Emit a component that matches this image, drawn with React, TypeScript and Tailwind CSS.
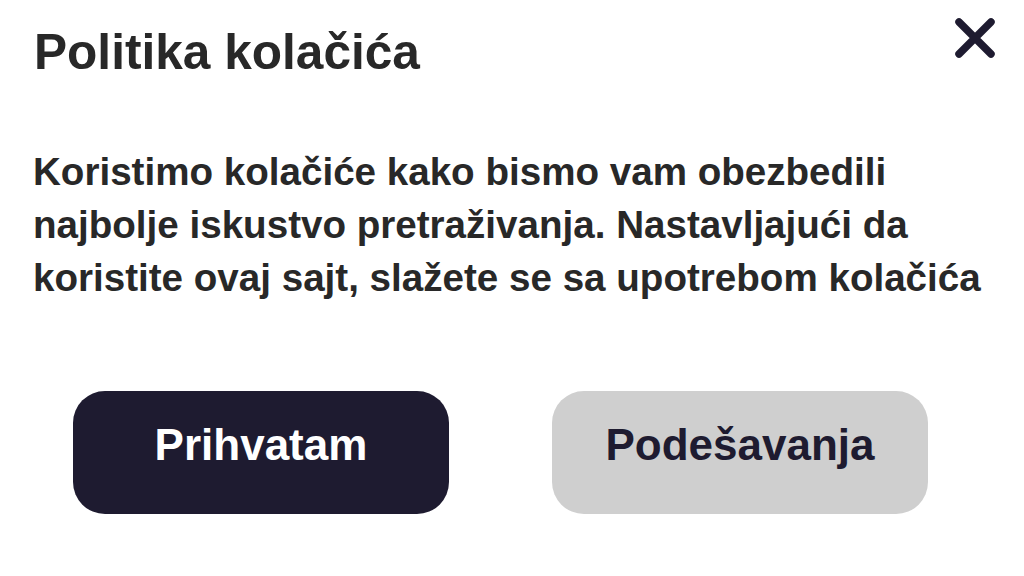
export default function App() {
  return (
    <div className="w-[1024px] h-[576px] bg-white overflow-hidden font-['Liberation_Sans',Arial,sans-serif]">
      <div className="flex items-start justify-between pl-[34px] pr-[27px] pt-[22px]">
        <h1 className="text-[49.6px] leading-[60px] font-bold text-[#282828]">Politika kolačića</h1>
        <button className="mt-[-6px] w-[44px] h-[44px] flex items-center justify-center" aria-label="Zatvori">
          <svg width="44" height="44" viewBox="0 0 44 44" fill="none">
            <path d="M6 6L38 38M38 6L6 38" stroke="#1e1b30" strokeWidth="7.5" strokeLinecap="round" />
          </svg>
        </button>
      </div>

      <p className="mt-[63px] pl-[33px] pr-[10px] text-[38.6px] leading-[53px] font-bold text-[#282828]">
        Koristimo kolačiće kako bismo vam obezbedili
        <br />
        najbolje iskustvo pretraživanja. Nastavljajući da
        <br />
        koristite ovaj sajt, slažete se sa upotrebom kolačića
      </p>

      <div className="mt-[87px] flex gap-[103px] pl-[73px]">
        <button className="w-[376px] h-[123px] pb-[16px] rounded-[32px] bg-[#1e1b30] text-white text-[44px] font-bold">
          Prihvatam
        </button>
        <button className="w-[376px] h-[123px] pb-[16px] rounded-[32px] bg-[#cfcfcf] text-[#1e1b30] text-[44px] font-bold">
          Podešavanja
        </button>
      </div>
    </div>
  );
}
